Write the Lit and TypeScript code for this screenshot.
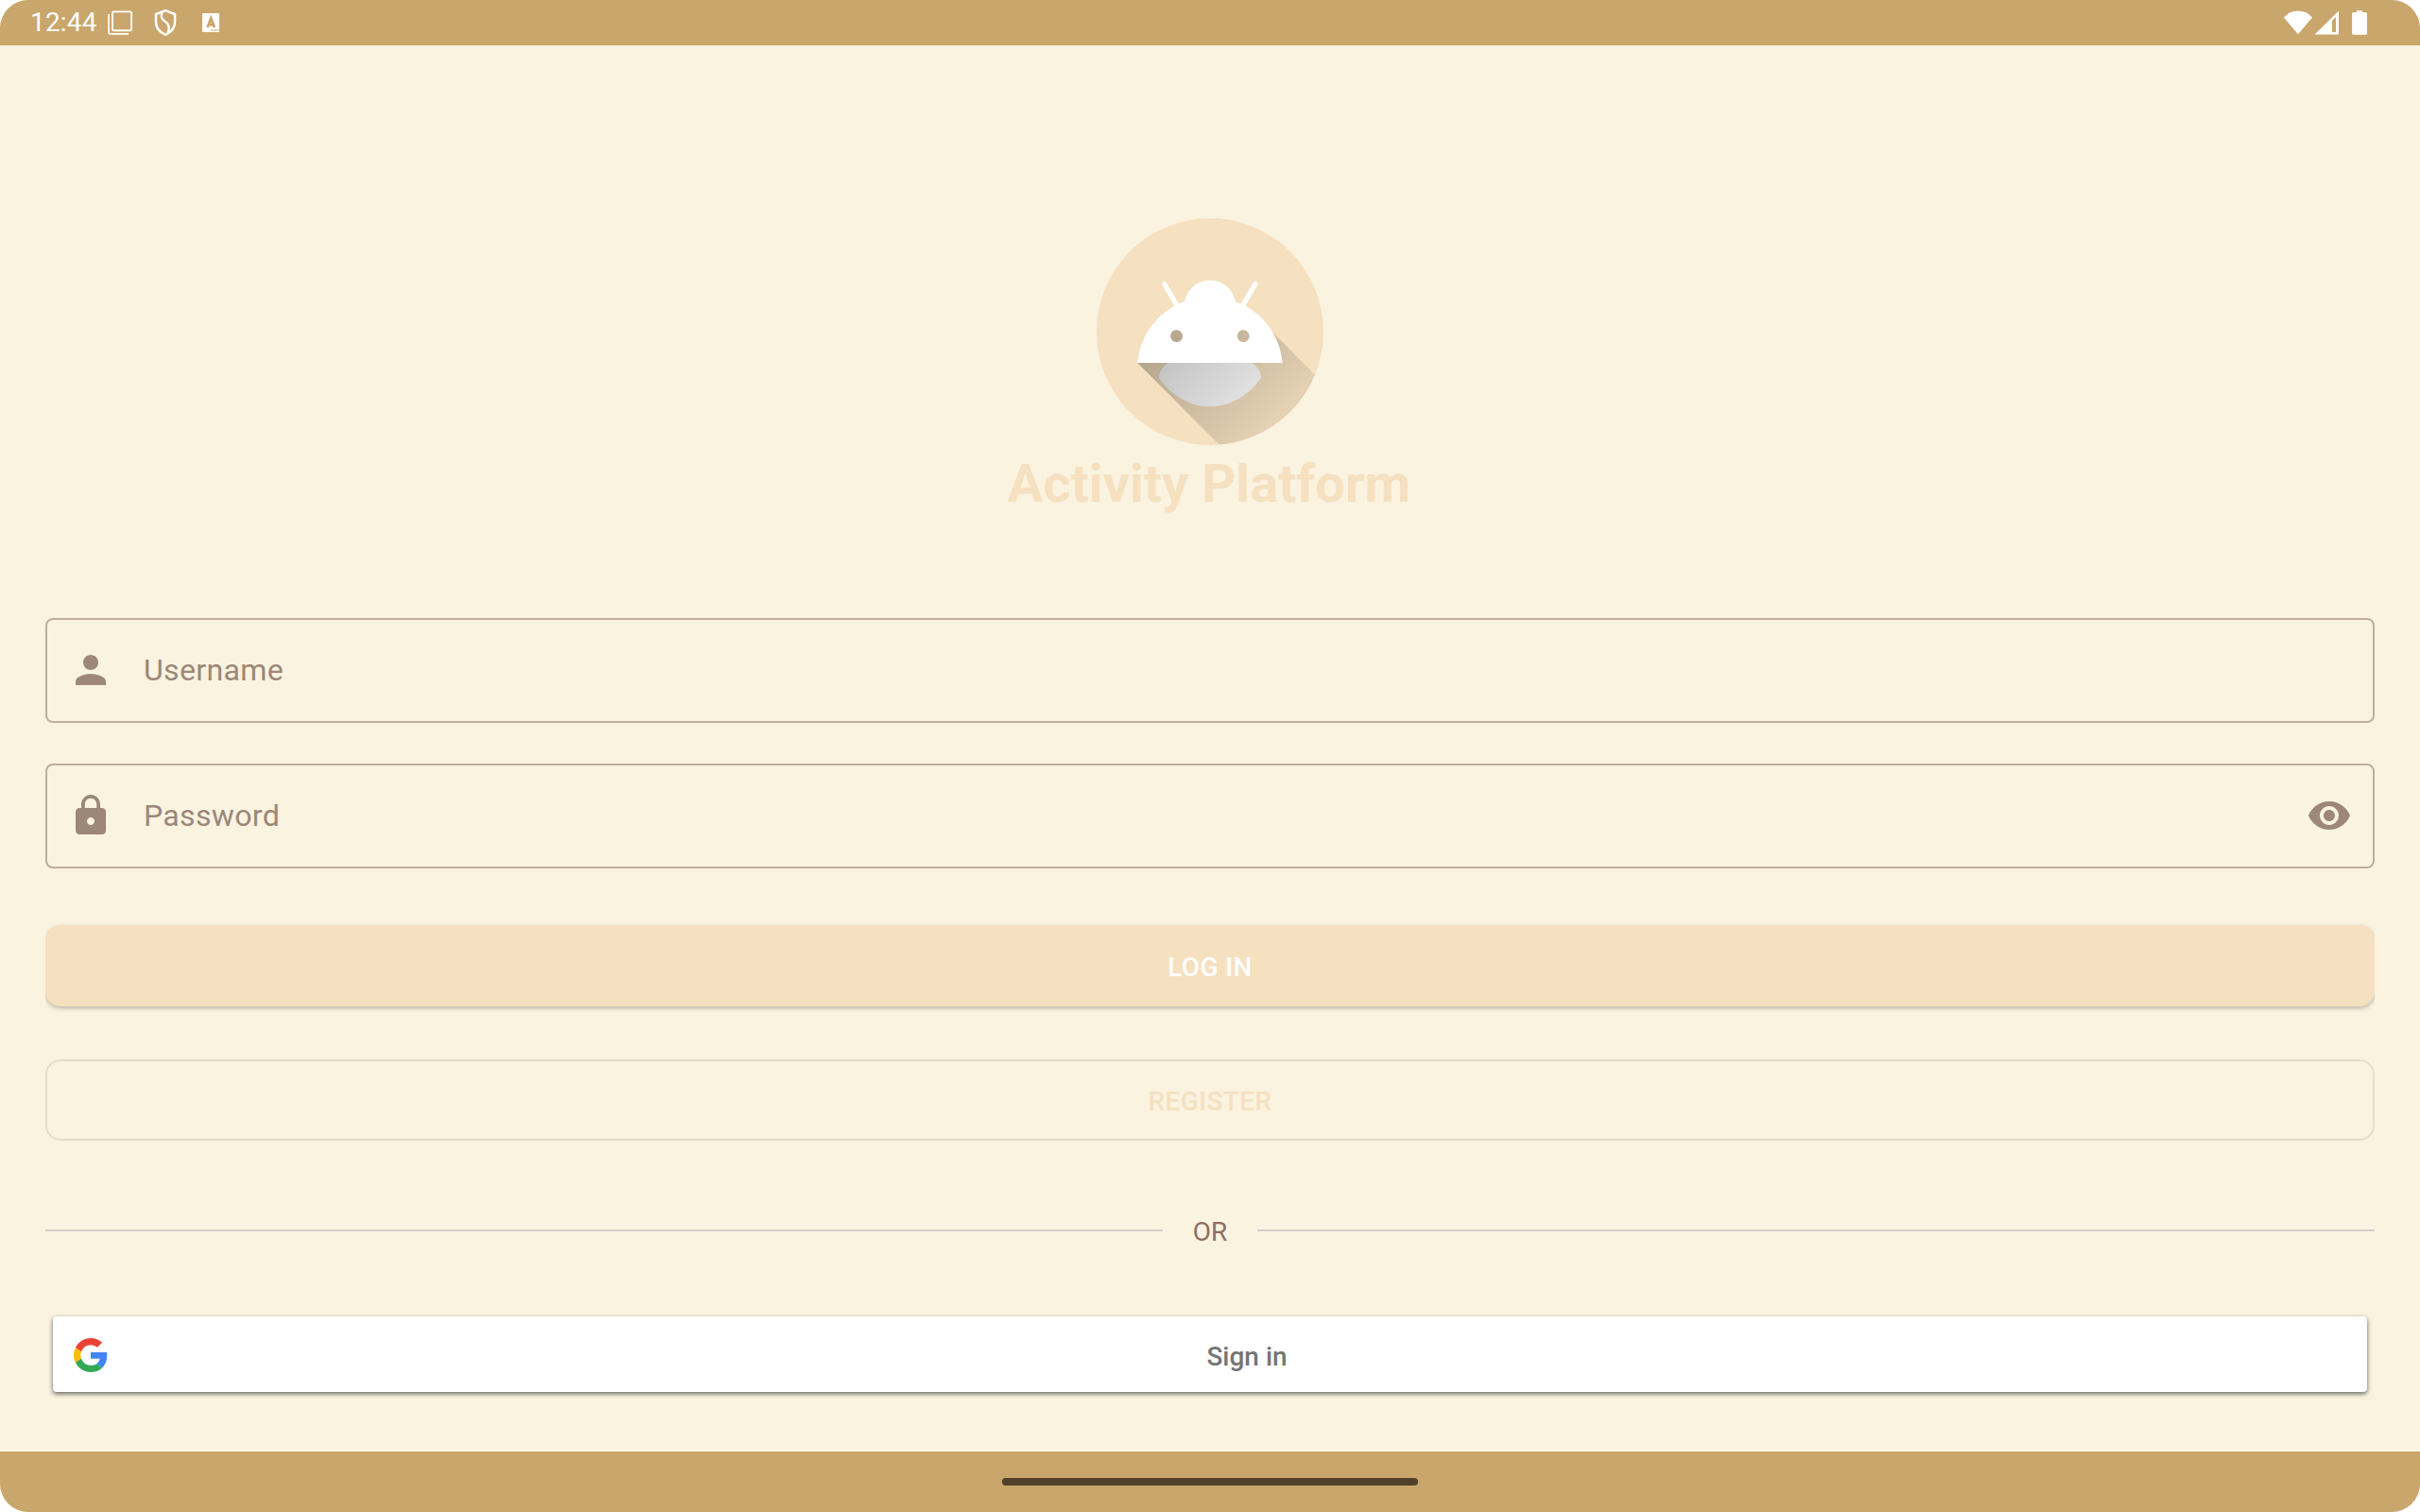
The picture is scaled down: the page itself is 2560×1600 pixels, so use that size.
import { LitElement, html, css, svg } from "lit";
import { customElement } from "lit/decorators.js";

const person = "M12 12c2.21 0 4-1.79 4-4s-1.79-4-4-4-4 1.790-4 4 1.790 4 4 4zm0 2c-2.670 0-8 1.340-8 4v2h16v-2c0-2.660-5.330-4-8-4z";
const lock = "M18 8h-1V6c0-2.760-2.240-5-5-5S7 3.240 7 6v2H6c-1.100 0-2 .9-2 2v10c0 1.100.9 2 2 2h12c1.100 0 2-.9 2-2V10c0-1.100-.9-2-2-2zm-6 9c-1.100 0-2-.9-2-2s.9-2 2-2 2 .9 2 2-.9 2-2 2zm3.100-9H8.900V6c0-1.710 1.390-3.100 3.100-3.100s3.100 1.390 3.100 3.100v2z";
const eye = "M12 4.500C7 4.500 2.730 7.610 1 12c1.730 4.390 6 7.500 11 7.500s9.270-3.110 11-7.500c-1.730-4.390-6-7.500-11-7.500zM12 17c-2.760 0-5-2.240-5-5s2.240-5 5-5 5 2.240 5 5-2.240 5-5 5zm0-8c-1.660 0-3 1.340-3 3s1.340 3 3 3 3-1.340 3-3-1.340-3-3-3z";

const icon = (d: string) => html`<svg class="icon" viewBox="0 0 24 24">${svg`<path d=${d} />`}</svg>`;

@customElement("app-root")
export class AppRoot extends LitElement {
  static styles = css`
    :host {
      display: block;
      width: 2560px;
      height: 1600px;
      background: #fff;
      font-family: Roboto, "Liberation Sans", sans-serif;
    }
    * { box-sizing: border-box; }
    svg { display: block; flex: none; }
    .screen {
      width: 2560px;
      height: 1600px;
      border-radius: 30px;
      overflow: hidden;
      background: #faf3e0;
      display: flex;
      flex-direction: column;
    }
    .status {
      height: 48px;
      flex: none;
      background: #c9a66b;
      color: #fff;
      display: flex;
      justify-content: space-between;
    }
    .side { display: flex; height: 48px; }
    .time {
      width: 80px;
      margin-left: 32px;
      font-size: 28px;
      line-height: 48px;
      letter-spacing: 0.2px;
      white-space: nowrap;
    }
    main {
      flex: 1;
      display: flex;
      flex-direction: column;
      padding: 183px 48px 0;
    }
    .logo { width: 240px; height: 240px; align-self: center; }
    h1 {
      margin: 8px 0 0;
      padding-right: 2px;
      text-align: center;
      font-size: 56px;
      line-height: 66px;
      font-weight: 700;
      letter-spacing: 0.06px;
      color: #f5e0c0;
    }
    .field {
      height: 111px;
      border: 2px solid #bfae9f;
      border-radius: 8px;
      display: flex;
      align-items: center;
      padding: 0 22px 1px;
      font-size: 32px;
      letter-spacing: 0.35px;
      color: #9c8778;
    }
    .user { margin-top: 109px; }
    .pass { margin-top: 43px; }
    .label { flex: 1; padding-left: 32px; line-height: 38px; }
    .icon { width: 48px; height: 48px; fill: #9c8778; }
    .button {
      flex: none;
      height: 86px;
      border-radius: 16px;
      display: flex;
      align-items: center;
      justify-content: center;
      font: 500 28px/33px Roboto, sans-serif;
      letter-spacing: 0.38px;
    }
    .login {
      margin-top: 60px;
      padding-top: 2px;
      background: #f5e0c0;
      color: #fff;
      box-shadow: 0 2px 5px rgba(0, 0, 0, 0.26);
      clip-path: inset(-4px 0 -10px 0);
    }
    .register {
      margin-top: 56px;
      padding-top: 2px;
      border: 2px solid #e6dccb;
      color: #f5e0c0;
    }
    .or {
      display: flex;
      align-items: center;
      margin-top: 78px;
      height: 34px;
      font-size: 28px;
      color: #8d6e63;
    }
    .rule { flex: 1; height: 2px; background: #d7ccc8; }
    .or-text { width: 100px; text-align: center; line-height: 34px; padding-top: 4px; }
    .google {
      margin: 74px 8px 0;
      height: 80px;
      flex: none;
      background: #fff;
      border-radius: 4px;
      box-shadow: 0 2px 5px rgba(0, 0, 0, 0.6);
      display: flex;
      align-items: center;
      padding: 2px 0 0 22px;
    }
    .sign { flex: 1; text-align: center; padding: 3px 0 0 20px; font: 500 28px/33px Roboto, sans-serif; color: #757575; }
    .nav {
      flex: none;
      height: 64px;
      background: #c9a66b;
      display: flex;
      justify-content: center;
      padding-top: 28px;
    }
    .pill { width: 440px; height: 8px; border-radius: 4px; background: #50412b; }
  `;

  private logo() {
    return html`<svg class="logo" viewBox="18 18 72 72">
      <defs>
        <linearGradient id="shade" gradientUnits="userSpaceOnUse" x1="42.949" y1="49.598" x2="85.848" y2="92.496">
          <stop offset="0" stop-color="#000" stop-opacity="0.267" />
          <stop offset="1" stop-color="#000" stop-opacity="0" />
        </linearGradient>
        <clipPath id="round"><circle cx="54" cy="54" r="36" /></clipPath>
      </defs>
      <g clip-path="url(#round)">
        <rect x="18" y="18" width="72" height="72" fill="#f5e0c0" />
        <circle cx="54" cy="45.800" r="8.150" fill="#fff" />
        <path fill="#fff" d="M54 77.800c-6.800 0-12.800-4.200-16.200-9.200C37.900 63 48.600 59.400 54 59.400s16.100 3.600 16.200 9.200C66.800 73.600 60.800 77.800 54 77.800z" />
        <path fill="url(#shade)" d="M31,63.928c0,0 6.4,-11 12.1,-13.1c7.2,-2.6 26,-1.4 26,-1.4l38.1,38.1L107,108.928l-32,-1L31,63.928z" />
        <path fill="#fff" d="M65.3,45.828l3.8,-6.6c0.2,-0.4 0.1,-0.9 -0.3,-1.1c-0.4,-0.2 -0.9,-0.1 -1.1,0.3l-3.9,6.7c-6.3,-2.8 -13.4,-2.8 -19.7,0l-3.9,-6.7c-0.2,-0.4 -0.7,-0.5 -1.1,-0.3C38.8,38.328 38.7,38.828 38.9,39.228l3.8,6.6C36.2,49.428 31.7,56.028 31,63.928h46C76.3,56.028 71.8,49.428 65.3,45.828zM43.4,57.328c-0.8,0 -1.5,-0.5 -1.8,-1.2c-0.3,-0.7 -0.1,-1.5 0.4,-2.1c0.5,-0.5 1.4,-0.7 2.1,-0.4c0.7,0.3 1.2,1 1.2,1.8C45.3,56.528 44.5,57.328 43.4,57.328zM64.6,57.328c-0.8,0 -1.5,-0.5 -1.8,-1.2s-0.1,-1.5 0.4,-2.1c0.5,-0.5 1.4,-0.7 2.1,-0.4c0.7,0.3 1.2,1 1.2,1.8C66.5,56.528 65.6,57.328 64.6,57.328z" />
      </g>
    </svg>`;
  }

  render() {
    return html`
      <div class="screen">
        <div class="status">
          <div class="side">
            <span class="time">12:44</span>
            <svg width="140" height="48" viewBox="112 0 140 48" fill="none" stroke="#fff">
              <rect x="119" y="12.400" width="20" height="19.800" rx="1.200" stroke-width="1.900" />
              <path d="M115 15v19.300q0 1.500 1.500 1.500H136" stroke-width="1.700" />
              <path d="M175 11.200l10 3.800v8.500c0 6-4 10.500-10 13.300-6-2.800-10-7.300-10-13.300V15z" stroke-width="2.500" stroke-linejoin="round" />
              <path d="M171.500 13.500c-2.500 5 .5 7.500 3.500 9.500 4 2.700 5 6 2.500 11.500" stroke-width="2.300" />
              <rect x="214" y="14" width="18" height="20" rx="1" fill="#fff" stroke="none" />
              <path d="M219.500 29l3.700-9.800 3.700 9.800M221 26.200h4.500" stroke="#c9a66b" stroke-width="2.700" />
              <path d="M223.600 32h7.600" stroke="#c9a66b" stroke-width="1.500" stroke-dasharray="1.800 1.100" />
            </svg>
          </div>
          <div class="side">
            <svg width="160" height="48" viewBox="2400 0 160 48" fill="#fff">
              <path d="M2431 36.300L2415.900 18.500Q2422 11.400 2431 11.400T2446.100 18.500z" />
              <path fill-rule="evenodd" d="M2448.500 36.600L2474 11.500V36.600zM2467 34H2471V18L2467 22z" />
              <path d="M2493 13V11.200H2499V13H2502.500Q2504 13 2504 14.500V35.300Q2504 36.800 2502.500 36.800H2489.600Q2488.100 36.800 2488.100 35.300V14.500Q2488.100 13 2489.600 13z" />
            </svg>
          </div>
        </div>
        <main>
          ${this.logo()}
          <h1>Activity Platform</h1>
          <div class="field user">${icon(person)}<span class="label">Username</span></div>
          <div class="field pass">${icon(lock)}<span class="label">Password</span>${icon(eye)}</div>
          <div class="button login">LOG IN</div>
          <div class="button register">REGISTER</div>
          <div class="or"><span class="rule"></span><span class="or-text">OR</span><span class="rule"></span></div>
          <div class="google">
            <svg width="36" height="36" viewBox="0 0 48 48">
              <path fill="#EA4335" d="M24 9.500c3.540 0 6.710 1.220 9.210 3.600l6.850-6.850C35.900 2.380 30.470 0 24 0 14.620 0 6.510 5.380 2.560 13.220l7.980 6.190C12.430 13.720 17.740 9.500 24 9.500z" />
              <path fill="#4285F4" d="M46.980 24.550c0-1.570-.15-3.090-.38-4.550H24v9.020h12.940c-.58 2.960-2.260 5.480-4.780 7.180l7.730 6c4.510-4.180 7.090-10.360 7.090-17.650z" />
              <path fill="#FBBC05" d="M10.530 28.590c-.48-1.450-.76-2.990-.76-4.590s.27-3.140.76-4.590l-7.980-6.190C.92 16.460 0 20.120 0 24c0 3.880.92 7.540 2.560 10.780l7.970-6.190z" />
              <path fill="#34A853" d="M24 48c6.480 0 11.930-2.130 15.890-5.810l-7.730-6c-2.150 1.450-4.920 2.300-8.160 2.300-6.260 0-11.570-4.220-13.470-9.910l-7.980 6.190C6.510 42.620 14.620 48 24 48z" />
            </svg>
            <span class="sign">Sign in</span>
          </div>
        </main>
        <div class="nav"><div class="pill"></div></div>
      </div>
    `;
  }
}
